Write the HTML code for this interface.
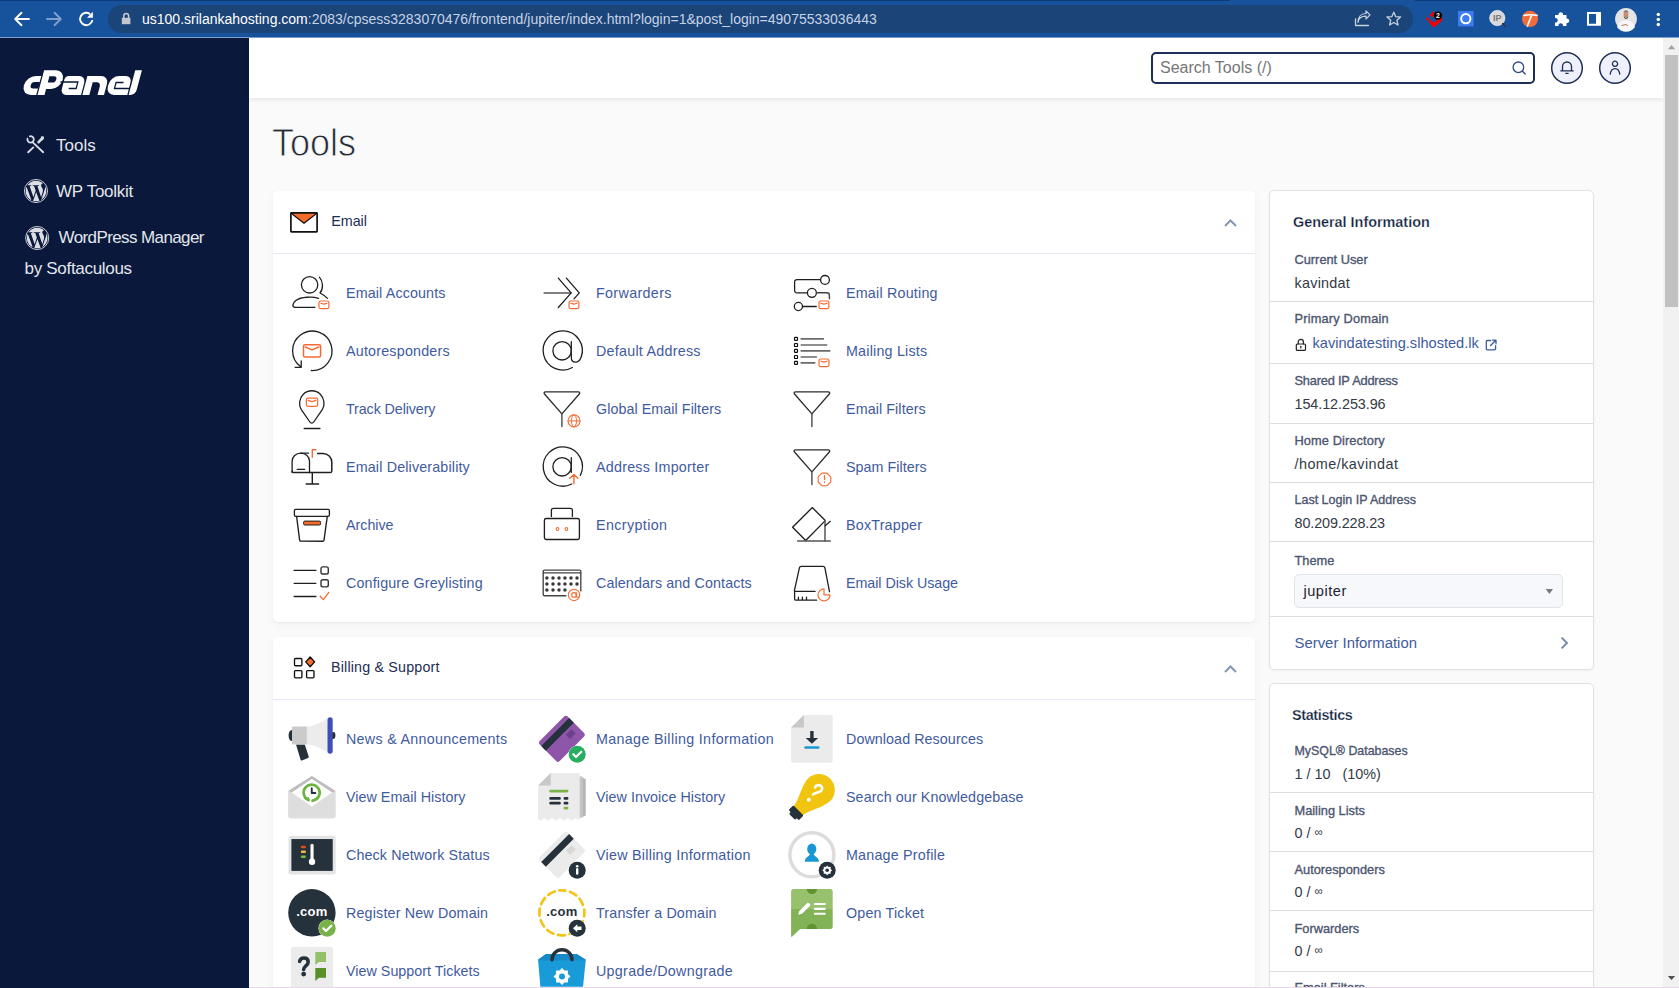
<!DOCTYPE html>
<html><head><meta charset="utf-8"><title>cPanel - Tools</title>
<style>
html,body{margin:0;padding:0;width:1679px;height:988px;overflow:hidden;background:#fafafa}
.t{position:absolute;white-space:nowrap;font-family:"Liberation Sans", sans-serif;line-height:normal}
svg{overflow:visible}
</style></head><body>
<div style="position:absolute;left:0px;top:0px;width:1679px;height:38px;background:#17529d"></div>
<div style="position:absolute;left:0px;top:0px;width:1230px;height:1px;background:#0f3a78"></div>
<div style="position:absolute;left:1415px;top:0px;width:264px;height:1px;background:#0f3a78"></div>
<div style="position:absolute;left:0px;top:37px;width:1679px;height:1px;background:#7fa2d4"></div>
<div style="position:absolute;left:108px;top:5px;width:1305px;height:28px;background:#1b4478;border-radius:14px"></div>
<svg style="position:absolute;left:0px;top:0px" width="40" height="38" viewBox="0 0 40 38"><path d="M29,19 H15.5 M21.5,12.8 L15.2,19 L21.5,25.2" fill="none" stroke="#ffffff" stroke-width="1.9" stroke-linecap="round" stroke-linejoin="round" stroke-linecap="butt"/></svg>
<svg style="position:absolute;left:0px;top:0px" width="70" height="38" viewBox="0 0 70 38"><path d="M47,19 H60.5 M54.5,12.8 L60.8,19 L54.5,25.2" fill="none" stroke="#7f9fcf" stroke-width="1.9" stroke-linecap="round" stroke-linejoin="round" stroke-linecap="butt"/></svg>
<svg style="position:absolute;left:0px;top:0px" width="100" height="38" viewBox="0 0 100 38"><path d="M92.3,20.6 A6.2,6.2 0 1 1 89.6,13.7" fill="none" stroke="#ffffff" stroke-width="1.9" stroke-linecap="round" stroke-linejoin="round" stroke-linecap="butt"/><path d="M87,17.75 L92.9,17.75 L92.9,11.8 Z" fill="#ffffff" /></svg>
<svg style="position:absolute;left:0px;top:0px" width="140" height="38" viewBox="0 0 140 38"><path d="M123.8,18 V15.8 A2.4,2.4 0 0 1 128.6,15.8 V18" fill="none" stroke="#c3c8d0" stroke-width="1.5" stroke-linecap="round" stroke-linejoin="round" /><path d="M121.8,17.8 H130.4 V24.2 H121.8 Z" fill="#c3c8d0" rx="1"/></svg>
<svg style="position:absolute;left:0px;top:0px" width="1400" height="38" viewBox="0 0 1400 38"><path d="M1355.5,19 V25.5 H1368.5" fill="none" stroke="#c8d0dc" stroke-width="1.3" stroke-linecap="round" stroke-linejoin="round" stroke-linecap="butt"/><path d="M1358,22.5 C1358.5,17.5 1362,16.2 1366,16.2 V19 L1370,14.8 L1366,10.8 V13.5 C1361,13.5 1358,17 1358,22.5 Z" fill="none" stroke="#c8d0dc" stroke-width="1.2" stroke-linecap="round" stroke-linejoin="round" /></svg>
<svg style="position:absolute;left:0px;top:0px" width="1420" height="38" viewBox="0 0 1420 38"><path d="M1393.8,12.2 L1395.7,16.6 L1400.6,17 L1396.9,20.3 L1398,25 L1393.8,22.5 L1389.6,25 L1390.7,20.3 L1387,17 L1391.9,16.6 Z" fill="none" stroke="#c8d0dc" stroke-width="1.3" stroke-linecap="round" stroke-linejoin="round" /></svg>
<svg style="position:absolute;left:0px;top:0px" width="1450" height="38" viewBox="0 0 1450 38"><path d="M1429.2,15.5 L1434.2,11 L1435.5,18 Z" fill="#f00000" /><circle cx="1427.6" cy="18.9" r="1.7" fill="#f00000"/><path d="M1430.6,22 L1434,25.2 L1440.6,19.3" fill="none" stroke="#f00000" stroke-width="3.6" stroke-linecap="round" stroke-linejoin="round" stroke-linecap="butt"/><circle cx="1437.9" cy="15.6" r="4.2" fill="#000"/><text x="1437.9" y="18" font-size="6.8" font-weight="700" fill="#fff" text-anchor="middle" font-family="Liberation Sans">2</text></svg>
<svg style="position:absolute;left:0px;top:0px" width="1480" height="38" viewBox="0 0 1480 38"><rect x="1458" y="11" width="15.6" height="15.4" fill="#3b7cf0"/><circle cx="1465.8" cy="18.7" r="4.6" fill="none" stroke="#fff" stroke-width="2"/></svg>
<svg style="position:absolute;left:0px;top:0px" width="1510" height="38" viewBox="0 0 1510 38"><circle cx="1497.3" cy="18" r="7.6" fill="#d9d9d9" stroke="#f0f0f0" stroke-width="0.8"/><text x="1497.2" y="21.3" font-size="9" font-weight="700" fill="#7a7a7a" text-anchor="middle" font-family="Liberation Sans">IP</text><path d="M1502.5,23.5 L1505.3,26.3" fill="none" stroke="#333" stroke-width="1.3" stroke-linecap="round" stroke-linejoin="round" /></svg>
<svg style="position:absolute;left:0px;top:0px" width="1540" height="38" viewBox="0 0 1540 38"><circle cx="1530" cy="18.9" r="8.1" fill="#f26b3a"/><path d="M1524,15.4 C1528,14.6 1533,14.6 1537,15.4 M1531.6,15.2 L1527.4,26" fill="none" stroke="#fff" stroke-width="1.7" stroke-linecap="round" stroke-linejoin="round" /></svg>
<svg style="position:absolute;left:0px;top:0px" width="1570" height="38" viewBox="0 0 1570 38"><path d="M1555,15 H1558.5 A2.3,2.3 0 1 1 1563,15 H1566.5 V18.5 A2.3,2.3 0 1 1 1566.5,23 V26 H1563 A2.3,2.3 0 1 0 1558.5,26 H1555 V22.5 A2.3,2.3 0 1 0 1555,18 Z" fill="#fff" /></svg>
<svg style="position:absolute;left:0px;top:0px" width="1610" height="38" viewBox="0 0 1610 38"><path d="M1587,12 H1601 V25.7 H1587 Z M1589,14 V23.8 H1596 V14 Z" fill="#fff" fill-rule="evenodd"/></svg>
<svg style="position:absolute;left:0px;top:0px" width="1640" height="38" viewBox="0 0 1640 38"><circle cx="1626" cy="19" r="10.9" fill="#e4e4e4"/><path d="M1617,27 C1619,21.5 1622,20.5 1626,20.5 C1630,20.5 1633,21.5 1635,27 A10.9,10.9 0 0 1 1617,27 Z" fill="#f7f7fa"/><ellipse cx="1626" cy="14.5" rx="2.4" ry="3.2" fill="#c29070"/><path d="M1623.2,13 C1623.2,9.5 1628.8,9.5 1628.8,13 L1628.3,11.8 C1627,11 1625,11 1623.7,11.8 Z" fill="#222"/><path d="M1623.8,16 C1624.5,18.5 1627.5,18.5 1628.2,16 L1628,17.5 C1627,19.2 1625,19.2 1624,17.5 Z" fill="#222"/><path d="M1621.5,25.5 L1626,24.5 L1628,26" stroke="#b07850" stroke-width="1" fill="none"/></svg>
<svg style="position:absolute;left:0px;top:0px" width="1670" height="38" viewBox="0 0 1670 38"><circle cx="1658.3" cy="14.4" r="1.7" fill="#fff"/><circle cx="1658.3" cy="19.4" r="1.7" fill="#fff"/><circle cx="1658.3" cy="24.5" r="1.7" fill="#fff"/></svg>
<div class="t" style="left:142px;top:11.33px;font-size:14px;color:#c6d3e6;font-weight:400;letter-spacing:0px"><span style="color:#fff">us100.srilankahosting.com</span>:2083/cpsess3283070476/frontend/jupiter/index.html?login=1&amp;post_login=49075533036443</div>
<div style="position:absolute;left:0px;top:38px;width:249px;height:950px;background:#09183b"></div>
<svg style="position:absolute;left:0px;top:0px" width="160" height="110" viewBox="0 0 160 110"><g transform="translate(0,95) skewX(-15)" fill="#fff"><path d="M36.2,-19 H30.8 A9.5,9.5 0 0 0 21.3,-9.5 A9.5,9.5 0 0 0 30.8,0 H36.2 Z"/><path d="M36.6,-12.9 H31.4 A3.25,3.25 0 0 0 28.15,-9.65 A3.25,3.25 0 0 0 31.4,-6.4 H36.6 Z" fill="#09183b"/><path d="M37.5,0 V-24.75 H49.5 A9.1,9.4 0 0 1 58.6,-15.35 A9.1,9.4 0 0 1 49.5,-6 H44.5 V0 Z"/><path d="M44.4,-18.7 H49 A3.1,3.1 0 0 1 52.1,-15.6 A3.1,3.1 0 0 1 49,-12.5 H44.4 Z" fill="#09183b"/><path d="M63,-19 H74 A7,7 0 0 1 81,-12 V0 H66.2 A6,6 0 0 1 60.2,-6 V-15.8 A3.2,3.2 0 0 1 63,-19 Z"/><path d="M57,-13 H74.4 V-6.5 H67" fill="none" stroke="#09183b" stroke-width="1.3"/><path d="M82.3,0 V-19 H96 A8,8 0 0 1 104,-11 V0 H97.5 V-8.7 A4,4 0 0 0 93.5,-12.7 H89.3 V0 Z"/><path d="M127.3,0 H114 A8.4,8.4 0 0 1 105.6,-8.4 V-10.6 A8.4,8.4 0 0 1 114,-19 H120.8 A6.3,6.3 0 0 1 127.1,-12.7 Z"/><path d="M120.2,-12.5 H112.75 V-6.5 H131" fill="none" stroke="#09183b" stroke-width="1.3"/><path d="M128.6,0 V-24.75 H135.3 V-5 A5,5 0 0 1 130.3,0 Z"/></g></svg>
<svg style="position:absolute;left:0px;top:0px" width="60" height="160" viewBox="0 0 60 160"><path d="M32.8,142.4 L43.2,152.2" fill="none" stroke="#dcdee4" stroke-width="1.9" stroke-linecap="round" stroke-linejoin="round" /><path d="M28.2,152.3 L33.3,147.4" fill="none" stroke="#dcdee4" stroke-width="1.9" stroke-linecap="round" stroke-linejoin="round" /><path d="M38.6,142.2 L42.6,137.8" fill="none" stroke="#dcdee4" stroke-width="2.6" stroke-linecap="round" stroke-linejoin="round" /><path d="M40.8,136.6 L43.8,136.4 L43.6,139.2 L41.5,141 Z" fill="#dcdee4" /><path d="M29.8,136.3 A3.2,3.2 0 1 1 27.5,138.6" fill="none" stroke="#dcdee4" stroke-width="1.8" stroke-linecap="round" stroke-linejoin="round" /></svg>
<svg style="position:absolute;left:0px;top:0px" width="60" height="260" viewBox="0 0 60 260"><circle cx="36" cy="191" r="11.55" fill="none" stroke="#dcdee3" stroke-width="0.9"/><g transform="translate(36,191) scale(0.9550) translate(-12,-12)"><path d="M21.469 6.825c.84 1.537 1.318 3.3 1.318 5.175 0 3.979-2.156 7.456-5.363 9.325l3.295-9.527c.615-1.54.82-2.771.82-3.864 0-.405-.026-.78-.07-1.11m-7.981.105c.647-.03 1.232-.105 1.232-.105.582-.075.514-.93-.067-.899 0 0-1.755.135-2.88.135-1.064 0-2.85-.15-2.85-.15-.585-.03-.661.855-.075.885 0 0 .54.061 1.125.09l1.68 4.605-2.37 7.08L5.354 6.9c.649-.03 1.234-.1 1.234-.1.585-.075.516-.93-.065-.896 0 0-1.746.138-2.874.138-.2 0-.438-.008-.69-.015C4.911 3.15 8.235 1.215 12 1.215c2.809 0 5.365 1.072 7.286 2.833-.046-.003-.091-.009-.141-.009-1.06 0-1.812.923-1.812 1.914 0 .89.513 1.643 1.06 2.531.411.72.89 1.643.89 2.977 0 .915-.354 1.994-.821 3.479l-1.075 3.585-3.9-11.61.001.014zM12 22.784c-1.059 0-2.081-.153-3.048-.437l3.237-9.406 3.315 9.087c.024.053.05.101.078.149-1.12.393-2.325.609-3.582.609M1.211 12c0-1.564.336-3.05.935-4.39L7.29 21.709C3.694 19.96 1.212 16.271 1.211 12" fill="#dcdee3"/></g></svg>
<svg style="position:absolute;left:0px;top:0px" width="60" height="260" viewBox="0 0 60 260"><circle cx="37.2" cy="238" r="11.55" fill="none" stroke="#dcdee3" stroke-width="0.9"/><g transform="translate(37.2,238) scale(0.9550) translate(-12,-12)"><path d="M21.469 6.825c.84 1.537 1.318 3.3 1.318 5.175 0 3.979-2.156 7.456-5.363 9.325l3.295-9.527c.615-1.54.82-2.771.82-3.864 0-.405-.026-.78-.07-1.11m-7.981.105c.647-.03 1.232-.105 1.232-.105.582-.075.514-.93-.067-.899 0 0-1.755.135-2.88.135-1.064 0-2.85-.15-2.85-.15-.585-.03-.661.855-.075.885 0 0 .54.061 1.125.09l1.68 4.605-2.37 7.08L5.354 6.9c.649-.03 1.234-.1 1.234-.1.585-.075.516-.93-.065-.896 0 0-1.746.138-2.874.138-.2 0-.438-.008-.69-.015C4.911 3.15 8.235 1.215 12 1.215c2.809 0 5.365 1.072 7.286 2.833-.046-.003-.091-.009-.141-.009-1.06 0-1.812.923-1.812 1.914 0 .89.513 1.643 1.06 2.531.411.72.89 1.643.89 2.977 0 .915-.354 1.994-.821 3.479l-1.075 3.585-3.9-11.61.001.014zM12 22.784c-1.059 0-2.081-.153-3.048-.437l3.237-9.406 3.315 9.087c.024.053.05.101.078.149-1.12.393-2.325.609-3.582.609M1.211 12c0-1.564.336-3.05.935-4.39L7.29 21.709C3.694 19.96 1.212 16.271 1.211 12" fill="#dcdee3"/></g></svg>
<div class="t" style="left:56px;top:135.62px;font-size:17px;color:#e3e6ec;font-weight:400;">Tools</div>
<div class="t" style="left:56px;top:181.62px;font-size:17px;color:#e3e6ec;font-weight:400;letter-spacing:-0.27px">WP Toolkit</div>
<div class="t" style="left:58.5px;top:227.62px;font-size:17px;color:#e3e6ec;font-weight:400;letter-spacing:-0.6px">WordPress Manager</div>
<div class="t" style="left:24.5px;top:259.12px;font-size:17px;color:#e3e6ec;font-weight:400;letter-spacing:-0.3px">by Softaculous</div>
<div style="position:absolute;left:249px;top:38px;width:1414px;height:950px;background:#fafafa"></div>
<div style="position:absolute;left:249px;top:38px;width:1414px;height:60px;background:#fff;box-shadow:0 1px 5px rgba(0,0,0,0.1)"></div>
<div style="position:absolute;left:1151px;top:52px;width:384px;height:32px;box-sizing:border-box;border:2px solid #1d2d55;border-radius:5px;background:#fff"></div>
<div class="t" style="left:1160px;top:58.52px;font-size:16px;color:#767676;font-weight:400;">Search Tools (/)</div>
<svg style="position:absolute;left:1500px;top:40px" width="140" height="60" viewBox="0 0 140 60"><circle cx="18.4" cy="27.3" r="5.3" fill="none" stroke="#2f4a80" stroke-width="1.3"/><path d="M22.4,31.3 L25.3,33.9" fill="none" stroke="#2f4a80" stroke-width="1.4" stroke-linecap="round" stroke-linejoin="round" /></svg>
<svg style="position:absolute;left:1540px;top:40px" width="100" height="60" viewBox="0 0 100 60"><circle cx="27" cy="28" r="15.3" fill="#eef0fb" stroke="#1d2d55" stroke-width="1.5"/><circle cx="75" cy="28" r="15.3" fill="#eef0fb" stroke="#1d2d55" stroke-width="1.5"/><path d="M22.5,30.5 V26.5 A4.5,4.5 0 0 1 31.5,26.5 V30.5 M20.8,30.8 H33.2 M25.8,33.3 H28.2" fill="none" stroke="#1d2d55" stroke-width="1.3" stroke-linecap="round" stroke-linejoin="round" /><path d="M75,21.2 A2.6,2.6 0 1 1 74.99,21.2 M70.2,34.2 C70.8,30.2 72.6,28.7 75,28.7 C77.4,28.7 79.2,30.2 79.8,34.2" fill="none" stroke="#1d2d55" stroke-width="1.3" stroke-linecap="round" stroke-linejoin="round" /></svg>
<div style="position:absolute;left:1663px;top:38px;width:16px;height:950px;background:#f1f1f1"></div>
<div style="position:absolute;left:1665px;top:55px;width:13px;height:252px;background:#c1c1c1"></div>
<svg style="position:absolute;left:1663px;top:38px" width="16" height="16" viewBox="0 0 16 16"><path d="M4.9,11.2 L12.2,11.2 L8.55,7 Z" fill="#a3a3a3" /></svg>
<svg style="position:absolute;left:1663px;top:970px" width="16" height="18" viewBox="0 0 16 18"><path d="M4.8,5.9 L12.2,5.9 L8.5,10.1 Z" fill="#505050" /></svg>
<div class="t" style="left:272px;top:120.76px;font-size:38.5px;color:#242a36;font-weight:400;-webkit-text-stroke:0.85px #fafafa;transform:scaleX(0.935);transform-origin:0 0">Tools</div>
<div style="position:absolute;left:273px;top:191px;width:982px;height:431px;background:#fff;border-radius:5px;box-shadow:0 1px 2px rgba(0,0,0,0.05),0 3px 10px rgba(0,0,0,0.035)"></div>
<div style="position:absolute;left:273px;top:253px;width:982px;height:1px;background:#e4e9f2"></div>
<svg style="position:absolute;left:285px;top:205px" width="40" height="35" viewBox="0 0 40 35"><path d="M6,8 H32 L19,18.5 Z" fill="#f36c2b" /><rect x="5.9" y="7.9" width="26.2" height="19" rx="0.6" fill="none" stroke="#111" stroke-width="1.7"/><path d="M6.5,8.5 L19,18.3 L31.5,8.5" fill="none" stroke="#111" stroke-width="1.2" stroke-linecap="round" stroke-linejoin="round" /></svg>
<div class="t" style="left:331.2px;top:213.06px;font-size:14.3px;color:#1d2e52;font-weight:400;">Email</div>
<svg style="position:absolute;left:1224px;top:219px" width="13" height="8" viewBox="0 0 13 8"><path d="M1 7 L6.5 1.5 L12 7" stroke="#8596b5" stroke-width="2" fill="none"/></svg>
<div class="t" style="left:346px;top:285.06px;font-size:14.3px;color:#3f5b9e;font-weight:400;letter-spacing:0.131px">Email Accounts</div>
<div class="t" style="left:346px;top:343.06px;font-size:14.3px;color:#3f5b9e;font-weight:400;letter-spacing:0.208px">Autoresponders</div>
<div class="t" style="left:346px;top:401.06px;font-size:14.3px;color:#3f5b9e;font-weight:400;letter-spacing:-0.100px">Track Delivery</div>
<div class="t" style="left:346px;top:459.06px;font-size:14.3px;color:#3f5b9e;font-weight:400;letter-spacing:0.158px">Email Deliverability</div>
<div class="t" style="left:346px;top:517.06px;font-size:14.3px;color:#3f5b9e;font-weight:400;letter-spacing:-0.017px">Archive</div>
<div class="t" style="left:346px;top:575.06px;font-size:14.3px;color:#3f5b9e;font-weight:400;letter-spacing:0.155px">Configure Greylisting</div>
<div class="t" style="left:596px;top:285.06px;font-size:14.3px;color:#3f5b9e;font-weight:400;letter-spacing:0.344px">Forwarders</div>
<div class="t" style="left:596px;top:343.06px;font-size:14.3px;color:#3f5b9e;font-weight:400;letter-spacing:0.250px">Default Address</div>
<div class="t" style="left:596px;top:401.06px;font-size:14.3px;color:#3f5b9e;font-weight:400;letter-spacing:0.063px">Global Email Filters</div>
<div class="t" style="left:596px;top:459.06px;font-size:14.3px;color:#3f5b9e;font-weight:400;letter-spacing:0.233px">Address Importer</div>
<div class="t" style="left:596px;top:517.06px;font-size:14.3px;color:#3f5b9e;font-weight:400;letter-spacing:0.389px">Encryption</div>
<div class="t" style="left:596px;top:575.06px;font-size:14.3px;color:#3f5b9e;font-weight:400;letter-spacing:0.110px">Calendars and Contacts</div>
<div class="t" style="left:846px;top:285.06px;font-size:14.3px;color:#3f5b9e;font-weight:400;letter-spacing:0.208px">Email Routing</div>
<div class="t" style="left:846px;top:343.06px;font-size:14.3px;color:#3f5b9e;font-weight:400;letter-spacing:0.208px">Mailing Lists</div>
<div class="t" style="left:846px;top:401.06px;font-size:14.3px;color:#3f5b9e;font-weight:400;letter-spacing:0.092px">Email Filters</div>
<div class="t" style="left:846px;top:459.06px;font-size:14.3px;color:#3f5b9e;font-weight:400;letter-spacing:0.045px">Spam Filters</div>
<div class="t" style="left:846px;top:517.06px;font-size:14.3px;color:#3f5b9e;font-weight:400;letter-spacing:0.200px">BoxTrapper</div>
<div class="t" style="left:846px;top:575.06px;font-size:14.3px;color:#3f5b9e;font-weight:400;letter-spacing:-0.053px">Email Disk Usage</div>
<svg style="position:absolute;left:286px;top:268px" width="50" height="50" viewBox="0 0 50 50"><circle cx="23.6" cy="16.8" r="8.2" fill="none" stroke="#1f1f1f" stroke-width="1.3"/><path d="M32.6,30.3 C27,28.6 15,28.4 9.8,32.6 C6.8,35 5.8,38.6 8.6,39.3 H28.9" fill="none" stroke="#1f1f1f" stroke-width="1.3" stroke-linecap="round" stroke-linejoin="round" /><path d="M33.4,9.1 C37.2,13.3 37.6,20.5 34,25 C37,26.5 39.5,28.4 41.5,30.4" fill="none" stroke="#1f1f1f" stroke-width="1.3" stroke-linecap="round" stroke-linejoin="round" /><rect x="33" y="33" width="9.899999999999999" height="7.600000000000001" rx="1.5" fill="#fff" stroke="#f36c35" stroke-width="1.2"/><path d="M34.8,35.2 L37.95,36.192 L41.1,35.2" fill="none" stroke="#f36c35" stroke-width="1.2" stroke-linecap="round" stroke-linejoin="round" /></svg>
<svg style="position:absolute;left:286px;top:326px" width="50" height="50" viewBox="0 0 50 50"><path d="M25.3,44.5 A19.7,19.7 0 1 0 14.9,40.9" fill="none" stroke="#1f1f1f" stroke-width="1.3" stroke-linecap="round" stroke-linejoin="round" /><path d="M15.2,34.9 V41.3 H9.1" fill="none" stroke="#1f1f1f" stroke-width="1.3" stroke-linecap="round" stroke-linejoin="round" stroke-linecap="butt"/><rect x="17.5" y="18.8" width="17.1" height="12.099999999999998" rx="1.5" fill="#fff" stroke="#f36c35" stroke-width="1.5"/><path d="M19.3,21.0 L26.05,23.881999999999998 L32.800000000000004,21.0" fill="none" stroke="#f36c35" stroke-width="1.5" stroke-linecap="round" stroke-linejoin="round" /></svg>
<svg style="position:absolute;left:286px;top:384px" width="50" height="50" viewBox="0 0 50 50"><path d="M23.9,38 L15.3,25.6 C12.4,21.2 13.2,14.2 17.3,10.2 C22,5.6 29.6,5.6 34.3,10.2 C38.4,14.2 39.2,21.2 36.3,25.6 L27.7,38 C26.8,39.4 24.8,39.4 23.9,38 Z" fill="none" stroke="#1f1f1f" stroke-width="1.3" stroke-linecap="round" stroke-linejoin="round" /><path d="M18.2,44.5 H33.9" fill="none" stroke="#1f1f1f" stroke-width="1.4" stroke-linecap="round" stroke-linejoin="round" stroke-linecap="butt"/><rect x="20.4" y="14.2" width="11.3" height="8.100000000000001" rx="1.5" fill="#fff" stroke="#f36c35" stroke-width="1.2"/><path d="M22.2,16.4 L26.049999999999997,17.602 L29.9,16.4" fill="none" stroke="#f36c35" stroke-width="1.2" stroke-linecap="round" stroke-linejoin="round" /></svg>
<svg style="position:absolute;left:286px;top:442px" width="50" height="50" viewBox="0 0 50 50"><path d="M6.1,30.5 V19.2 A8.7,8 0 0 1 14.8,11.2 H22.5 M6.1,19.2" fill="none" stroke="#1f1f1f" stroke-width="1.3" stroke-linecap="round" stroke-linejoin="round" /><path d="M14.8,11.2 A8.7,8 0 0 1 23.5,19.2 V30.5" fill="none" stroke="#1f1f1f" stroke-width="1.3" stroke-linecap="round" stroke-linejoin="round" /><path d="M31.6,11.4 H37 A8.8,8.8 0 0 1 45.8,20.2 V29 A1.6,1.6 0 0 1 44.2,30.6 H7.7 A1.6,1.6 0 0 1 6.1,29" fill="none" stroke="#1f1f1f" stroke-width="1.5" stroke-linecap="round" stroke-linejoin="round" /><path d="M11.1,27.3 H18.7" fill="none" stroke="#1f1f1f" stroke-width="1.2" stroke-linecap="round" stroke-linejoin="round" stroke-linecap="butt"/><path d="M26.3,31 V42 M20.2,42 H32.6" fill="none" stroke="#1f1f1f" stroke-width="1.4" stroke-linecap="round" stroke-linejoin="round" stroke-linecap="butt"/><path d="M26.3,15.2 V7.7 H29.9" fill="none" stroke="#f36c35" stroke-width="1.4" stroke-linecap="round" stroke-linejoin="round" stroke-linecap="butt"/></svg>
<svg style="position:absolute;left:286px;top:500px" width="50" height="50" viewBox="0 0 50 50"><rect x="8.4" y="9.4" width="35" height="7" rx="1.3" fill="none" stroke="#1f1f1f" stroke-width="1.35"/><path d="M10.6,16.4 L13.6,40.2 A1.2,1.2 0 0 0 14.8,41.2 H36.8 A1.2,1.2 0 0 0 38,40.2 L41.3,16.4" fill="none" stroke="#1f1f1f" stroke-width="1.35" stroke-linecap="round" stroke-linejoin="round" /><rect x="17.6" y="21.1" width="17" height="3.9" rx="1.2" fill="#f36c2b" stroke="#1f1f1f" stroke-width="1"/></svg>
<svg style="position:absolute;left:286px;top:558px" width="50" height="50" viewBox="0 0 50 50"><path d="M8.1,12.4 H29.9 M8.1,25.3 H29.9 M8.1,38.5 H29.9" fill="none" stroke="#1f1f1f" stroke-width="1.3" stroke-linecap="round" stroke-linejoin="round" stroke-linecap="butt"/><rect x="35" y="8.9" width="7.3" height="7.1" rx="1.8" fill="none" stroke="#333" stroke-width="1.4"/><rect x="35" y="21.8" width="7.3" height="7.1" rx="1.8" fill="none" stroke="#333" stroke-width="1.4"/><path d="M34.2,38.2 L37.4,41.6 L42.8,34.4" fill="none" stroke="#f36c35" stroke-width="1.3" stroke-linecap="round" stroke-linejoin="round" /></svg>
<svg style="position:absolute;left:536px;top:268px" width="50" height="50" viewBox="0 0 50 50"><path d="M8.1,24.9 H34.9" fill="none" stroke="#555" stroke-width="1.5" stroke-linecap="round" stroke-linejoin="round" stroke-linecap="butt"/><path d="M22.3,10.1 L35.2,24.9 L22.3,39.5" fill="none" stroke="#1f1f1f" stroke-width="1.3" stroke-linecap="round" stroke-linejoin="round" /><path d="M30.4,10.1 L43.3,24.9 L38,30.9" fill="none" stroke="#1f1f1f" stroke-width="1.3" stroke-linecap="round" stroke-linejoin="round" /><rect x="33" y="33" width="9.899999999999999" height="7.600000000000001" rx="1.5" fill="#fff" stroke="#f36c35" stroke-width="1.2"/><path d="M34.8,35.2 L37.95,36.192 L41.1,35.2" fill="none" stroke="#f36c35" stroke-width="1.2" stroke-linecap="round" stroke-linejoin="round" /></svg>
<svg style="position:absolute;left:536px;top:326px" width="50" height="50" viewBox="0 0 50 50"><path d="M36.4,41.5 A19.6,19.6 0 1 1 45.2,31 C43.9,34.6 41.8,36.2 39.5,36.2 C37,36.2 35.3,34.6 35.3,31.5 V15.7" fill="none" stroke="#1f1f1f" stroke-width="1.3" stroke-linecap="round" stroke-linejoin="round" /><circle cx="26.1" cy="24.8" r="9.2" fill="none" stroke="#1f1f1f" stroke-width="1.3"/></svg>
<svg style="position:absolute;left:536px;top:384px" width="50" height="50" viewBox="0 0 50 50"><path d="M9.6,7.8 H42.2 C43.6,7.8 44.2,9 43.3,10 L25.9,29.9 L8.5,10 C7.6,9 8.2,7.8 9.6,7.8 Z" fill="none" stroke="#2a2a2a" stroke-width="1.3" stroke-linecap="round" stroke-linejoin="round" /><path d="M25.9,29.9 V42.5" fill="none" stroke="#555" stroke-width="1.5" stroke-linecap="round" stroke-linejoin="round" stroke-linecap="butt"/><circle cx="38" cy="36.9" r="6" fill="#fff" stroke="#f36c35" stroke-width="1.1"/><ellipse cx="38" cy="36.9" rx="2.5" ry="6" fill="none" stroke="#f36c35" stroke-width="1"/><path d="M32,36.9 H44" fill="none" stroke="#f36c35" stroke-width="1" stroke-linecap="round" stroke-linejoin="round" /></svg>
<svg style="position:absolute;left:536px;top:442px" width="50" height="50" viewBox="0 0 50 50"><path d="M35.7,42 A19.6,19.6 0 1 1 44.3,33.4" fill="none" stroke="#1f1f1f" stroke-width="1.3" stroke-linecap="round" stroke-linejoin="round" /><circle cx="26.1" cy="24.8" r="9.2" fill="none" stroke="#1f1f1f" stroke-width="1.3"/><path d="M35.3,15.7 V30.4" fill="none" stroke="#1f1f1f" stroke-width="1.3" stroke-linecap="round" stroke-linejoin="round" stroke-linecap="butt"/><path d="M37.9,41.7 V32.8 M33.8,36.3 L37.9,32.4 L42,36.3" fill="none" stroke="#f36c35" stroke-width="1.4" stroke-linecap="round" stroke-linejoin="round" /></svg>
<svg style="position:absolute;left:536px;top:500px" width="50" height="50" viewBox="0 0 50 50"><path d="M15.4,16.4 V10.3 A2,2 0 0 1 17.4,8.3 H34.4 A2,2 0 0 1 36.4,10.3 V16.4" fill="none" stroke="#1f1f1f" stroke-width="1.3" stroke-linecap="round" stroke-linejoin="round" /><rect x="8.4" y="18.5" width="35" height="21" rx="1.8" fill="none" stroke="#1f1f1f" stroke-width="1.35"/><ellipse cx="21.5" cy="28.95" rx="1.3" ry="1.5" fill="none" stroke="#f36c35" stroke-width="1.1"/><ellipse cx="30.4" cy="28.95" rx="1.3" ry="1.5" fill="none" stroke="#f36c35" stroke-width="1.1"/></svg>
<svg style="position:absolute;left:536px;top:558px" width="50" height="50" viewBox="0 0 50 50"><path d="M29.9,37.7 H8.5 A1.3,1.3 0 0 1 7.2,36.4 V13.4 A1.3,1.3 0 0 1 8.5,12.1 H43.5 A1.3,1.3 0 0 1 44.8,13.4 V32.9" fill="none" stroke="#444" stroke-width="1.35" stroke-linecap="round" stroke-linejoin="round" /><path d="M7.3,14.9 H44.7" fill="none" stroke="#444" stroke-width="1.35" stroke-linecap="round" stroke-linejoin="round" stroke-linecap="butt"/><circle cx="10.9" cy="20" r="1.75" fill="#383838"/><circle cx="17" cy="20" r="1.75" fill="#383838"/><circle cx="23" cy="20" r="1.75" fill="#383838"/><circle cx="28.95" cy="20" r="1.75" fill="#383838"/><circle cx="35" cy="20" r="1.75" fill="#383838"/><circle cx="41" cy="20" r="1.75" fill="#383838"/><circle cx="10.9" cy="25.9" r="1.75" fill="#383838"/><circle cx="17" cy="25.9" r="1.75" fill="#383838"/><circle cx="23" cy="25.9" r="1.75" fill="#383838"/><circle cx="28.95" cy="25.9" r="1.75" fill="#383838"/><circle cx="35" cy="25.9" r="1.75" fill="#383838"/><circle cx="41" cy="25.9" r="1.75" fill="#383838"/><circle cx="10.9" cy="31.9" r="1.75" fill="#383838"/><circle cx="17" cy="31.9" r="1.75" fill="#383838"/><circle cx="23" cy="31.9" r="1.75" fill="#383838"/><circle cx="28.95" cy="31.9" r="1.75" fill="#383838"/><circle cx="38" cy="36.9" r="5.7" fill="none" stroke="#f36c35" stroke-width="1.1"/><circle cx="38" cy="36.9" r="2.3" fill="none" stroke="#f36c35" stroke-width="1.1"/><path d="M40.3,34.5 V38.2 C40.3,39.5 41.6,39.7 42.3,38.8" fill="none" stroke="#f36c35" stroke-width="1.1" stroke-linecap="round" stroke-linejoin="round" /></svg>
<svg style="position:absolute;left:786px;top:268px" width="50" height="50" viewBox="0 0 50 50"><path d="M34.4,11.55 H11 A2.4,2.4 0 0 0 8.6,14 V22.4 A2.4,2.4 0 0 0 11,24.8 H21.2" fill="none" stroke="#1f1f1f" stroke-width="1.3" stroke-linecap="round" stroke-linejoin="round" /><circle cx="39" cy="11.9" r="4.4" fill="#fff" stroke="#1f1f1f" stroke-width="1.3"/><circle cx="25.9" cy="24.8" r="4.5" fill="#fff" stroke="#1f1f1f" stroke-width="1.3"/><path d="M30.6,24.8 H40.9 A2.5,2.5 0 0 1 43.4,27.3 V30.8" fill="none" stroke="#444" stroke-width="1.4" stroke-linecap="round" stroke-linejoin="round" /><circle cx="12.4" cy="38.5" r="4.1" fill="#fff" stroke="#1f1f1f" stroke-width="1.3"/><path d="M16.7,38.5 H30.3" fill="none" stroke="#1f1f1f" stroke-width="1.3" stroke-linecap="round" stroke-linejoin="round" stroke-linecap="butt"/><rect x="33" y="33" width="9.899999999999999" height="7.600000000000001" rx="1.5" fill="#fff" stroke="#f36c35" stroke-width="1.2"/><path d="M34.8,35.2 L37.95,36.192 L41.1,35.2" fill="none" stroke="#f36c35" stroke-width="1.2" stroke-linecap="round" stroke-linejoin="round" /></svg>
<svg style="position:absolute;left:786px;top:326px" width="50" height="50" viewBox="0 0 50 50"><rect x="8.5" y="11.4" width="3" height="3" rx="0.6" fill="none" stroke="#111" stroke-width="1.2"/><path d="M15.2,12.9 H37.4" fill="none" stroke="#6a6a6a" stroke-width="1.6" stroke-linecap="round" stroke-linejoin="round" stroke-linecap="butt"/><rect x="8.5" y="17.5" width="3" height="3" rx="0.6" fill="none" stroke="#111" stroke-width="1.2"/><path d="M15.2,19 H40.7" fill="none" stroke="#6a6a6a" stroke-width="1.6" stroke-linecap="round" stroke-linejoin="round" stroke-linecap="butt"/><rect x="8.5" y="23.4" width="3" height="3" rx="0.6" fill="none" stroke="#111" stroke-width="1.2"/><path d="M15.2,24.9 H43.8" fill="none" stroke="#6a6a6a" stroke-width="1.6" stroke-linecap="round" stroke-linejoin="round" stroke-linecap="butt"/><rect x="8.5" y="29.5" width="3" height="3" rx="0.6" fill="none" stroke="#111" stroke-width="1.2"/><path d="M15.2,31 H30.4" fill="none" stroke="#6a6a6a" stroke-width="1.6" stroke-linecap="round" stroke-linejoin="round" stroke-linecap="butt"/><rect x="8.5" y="35.4" width="3" height="3" rx="0.6" fill="none" stroke="#111" stroke-width="1.2"/><path d="M15.2,36.9 H28.8" fill="none" stroke="#6a6a6a" stroke-width="1.6" stroke-linecap="round" stroke-linejoin="round" stroke-linecap="butt"/><rect x="33" y="33" width="9.899999999999999" height="7.600000000000001" rx="1.5" fill="#fff" stroke="#f36c35" stroke-width="1.2"/><path d="M34.8,35.2 L37.95,36.192 L41.1,35.2" fill="none" stroke="#f36c35" stroke-width="1.2" stroke-linecap="round" stroke-linejoin="round" /></svg>
<svg style="position:absolute;left:786px;top:384px" width="50" height="50" viewBox="0 0 50 50"><path d="M9.6,7.8 H42.2 C43.6,7.8 44.2,9 43.3,10 L25.9,29.9 L8.5,10 C7.6,9 8.2,7.8 9.6,7.8 Z" fill="none" stroke="#2a2a2a" stroke-width="1.3" stroke-linecap="round" stroke-linejoin="round" /><path d="M25.9,29.9 V42.5" fill="none" stroke="#555" stroke-width="1.5" stroke-linecap="round" stroke-linejoin="round" stroke-linecap="butt"/></svg>
<svg style="position:absolute;left:786px;top:442px" width="50" height="50" viewBox="0 0 50 50"><path d="M9.6,7.8 H42.2 C43.6,7.8 44.2,9 43.3,10 L25.9,29.9 L8.5,10 C7.6,9 8.2,7.8 9.6,7.8 Z" fill="none" stroke="#2a2a2a" stroke-width="1.3" stroke-linecap="round" stroke-linejoin="round" /><path d="M25.9,29.9 V42.5" fill="none" stroke="#555" stroke-width="1.5" stroke-linecap="round" stroke-linejoin="round" stroke-linecap="butt"/><path d="M35.9,31.1 H41.1 L44.8,34.8 V40 L41.1,43.7 H35.9 L32.2,40 V34.8 Z" fill="none" stroke="#f36c35" stroke-width="1.1" stroke-linecap="round" stroke-linejoin="round" /><path d="M38.5,33.6 V37.4 M38.5,40 V40.3" fill="none" stroke="#f36c35" stroke-width="1.3" stroke-linecap="round" stroke-linejoin="round" /></svg>
<svg style="position:absolute;left:786px;top:500px" width="50" height="50" viewBox="0 0 50 50"><path d="M26.3,7.6 L39,20.2 M39,20.9 L19.7,40.5 L6.6,27.3 L25.6,8.3" fill="none" stroke="#1f1f1f" stroke-width="1.35" stroke-linecap="round" stroke-linejoin="round" /><path d="M11.6,41 H44.3" fill="none" stroke="#555" stroke-width="1.5" stroke-linecap="round" stroke-linejoin="round" stroke-linecap="butt"/><path d="M39,20.75 V41" fill="none" stroke="#555" stroke-width="1.5" stroke-linecap="round" stroke-linejoin="round" stroke-linecap="butt"/><path d="M39.2,25.8 L44.3,21.3" fill="none" stroke="#1f1f1f" stroke-width="1.2" stroke-linecap="round" stroke-linejoin="round" /></svg>
<svg style="position:absolute;left:786px;top:558px" width="50" height="50" viewBox="0 0 50 50"><path d="M8.35,32.9 L13.4,9.9 A2,2 0 0 1 15.3,8.35 H37 A2,2 0 0 1 38.9,9.9 L43.5,33.6" fill="none" stroke="#1f1f1f" stroke-width="1.3" stroke-linecap="round" stroke-linejoin="round" /><path d="M8.6,32.9 V41 A1.2,1.2 0 0 0 9.8,42.2 H30.6 M8.6,33.4 H29.1 M12.4,39.2 V42 M16.4,39.2 V42 M20.5,39.2 V42" fill="none" stroke="#1f1f1f" stroke-width="1.3" stroke-linecap="round" stroke-linejoin="round" stroke-linecap="butt"/><path d="M38,30.9 A6,6 0 1 0 44,36.9 H38 Z" fill="none" stroke="#f36c35" stroke-width="1.2" stroke-linecap="round" stroke-linejoin="round" /></svg>
<div style="position:absolute;left:273px;top:637px;width:982px;height:400px;background:#fff;border-radius:5px;box-shadow:0 1px 2px rgba(0,0,0,0.05),0 3px 10px rgba(0,0,0,0.035)"></div>
<div style="position:absolute;left:273px;top:699px;width:982px;height:1px;background:#e4e9f2"></div>
<svg style="position:absolute;left:285px;top:650px" width="40" height="35" viewBox="0 0 40 35"><rect x="9.5" y="8.5" width="7.4" height="7.2" rx="1" fill="none" stroke="#111" stroke-width="1.35"/><rect x="9.5" y="20.6" width="7.4" height="7.2" rx="1" fill="none" stroke="#111" stroke-width="1.35"/><rect x="21.6" y="20.6" width="7.4" height="7.2" rx="1" fill="none" stroke="#111" stroke-width="1.35"/><path d="M25.2,7 L29.6,11.9 L25.2,16.8 L20.8,11.9 Z" fill="#f36c2b" stroke="#111" stroke-width="1.4" stroke-linejoin="round"/></svg>
<div class="t" style="left:331px;top:659.06px;font-size:14.3px;color:#1d2e52;font-weight:400;letter-spacing:0.17px">Billing &amp; Support</div>
<svg style="position:absolute;left:1224px;top:665px" width="13" height="8" viewBox="0 0 13 8"><path d="M1 7 L6.5 1.5 L12 7" stroke="#8596b5" stroke-width="2" fill="none"/></svg>
<div class="t" style="left:346px;top:731.06px;font-size:14.3px;color:#3f5b9e;font-weight:400;letter-spacing:0.289px">News &amp; Announcements</div>
<div class="t" style="left:346px;top:789.06px;font-size:14.3px;color:#3f5b9e;font-weight:400;letter-spacing:0.024px">View Email History</div>
<div class="t" style="left:346px;top:847.06px;font-size:14.3px;color:#3f5b9e;font-weight:400;letter-spacing:0.116px">Check Network Status</div>
<div class="t" style="left:346px;top:905.06px;font-size:14.3px;color:#3f5b9e;font-weight:400;letter-spacing:0.167px">Register New Domain</div>
<div class="t" style="left:346px;top:963.06px;font-size:14.3px;color:#3f5b9e;font-weight:400;letter-spacing:0.026px">View Support Tickets</div>
<div class="t" style="left:596px;top:731.06px;font-size:14.3px;color:#3f5b9e;font-weight:400;letter-spacing:0.336px">Manage Billing Information</div>
<div class="t" style="left:596px;top:789.06px;font-size:14.3px;color:#3f5b9e;font-weight:400;letter-spacing:0.037px">View Invoice History</div>
<div class="t" style="left:596px;top:847.06px;font-size:14.3px;color:#3f5b9e;font-weight:400;letter-spacing:0.265px">View Billing Information</div>
<div class="t" style="left:596px;top:905.06px;font-size:14.3px;color:#3f5b9e;font-weight:400;letter-spacing:0.162px">Transfer a Domain</div>
<div class="t" style="left:596px;top:963.06px;font-size:14.3px;color:#3f5b9e;font-weight:400;letter-spacing:0.294px">Upgrade/Downgrade</div>
<div class="t" style="left:846px;top:731.06px;font-size:14.3px;color:#3f5b9e;font-weight:400;letter-spacing:0.071px">Download Resources</div>
<div class="t" style="left:846px;top:789.06px;font-size:14.3px;color:#3f5b9e;font-weight:400;letter-spacing:0.078px">Search our Knowledgebase</div>
<div class="t" style="left:846px;top:847.06px;font-size:14.3px;color:#3f5b9e;font-weight:400;letter-spacing:0.208px">Manage Profile</div>
<div class="t" style="left:846px;top:905.06px;font-size:14.3px;color:#3f5b9e;font-weight:400;letter-spacing:0.180px">Open Ticket</div>
<svg style="position:absolute;left:282px;top:710px" width="60" height="60" viewBox="0 0 60 60"><ellipse cx="9.8" cy="25.5" rx="3.2" ry="5.5" fill="#25313b"/><path d="M14,34.6 H22.8 L26.7,46.5 C26.9,47.2 26.5,47.8 26,48.1 L20,50.4 C19.3,50.6 18.7,50.3 18.5,49.6 Z" fill="#25313b" /><path d="M11,16.4 H24.9 V34.6 H11 A1,1 0 0 1 10,33.6 V17.4 A1,1 0 0 1 11,16.4 Z" fill="#cbcbcb" /><path d="M24.9,16.4 C32,16.4 40,12 45.6,8.5 V42.5 C40,39 32,34.6 24.9,34.6 Z" fill="#ececec" /><ellipse cx="51.3" cy="25.5" rx="2.1" ry="3.4" fill="#25313b"/><rect x="45.5" y="7.3" width="5.2" height="36.4" rx="2.6" fill="#3f4fb8"/></svg>
<svg style="position:absolute;left:282px;top:768px" width="60" height="60" viewBox="0 0 60 60"><path d="M6.1,23 L29.9,8 L53.7,23 V48 A2.4,2.4 0 0 1 51.3,50.4 H8.5 A2.4,2.4 0 0 1 6.1,48 Z" fill="#dedede" /><path d="M6.6,22.8 L29.9,7.9 L53.3,22.8 L50.1,24.6 L29.9,11 L9.8,24.6 Z" fill="#bdbdbd" /><path d="M9.8,24.6 L29.9,11 L50.1,24.6 L29.9,38.5 Z" fill="#fff" /><path d="M26.5,32 A8,8 0 1 1 30.5,32.6" fill="none" stroke="#6db33f" stroke-width="2.7" stroke-linecap="round" stroke-linejoin="round" stroke-linecap="butt"/><path d="M21.3,30.6 L27.3,29 L27,33.5 Z" fill="#6db33f" /><path d="M29.75,20.3 V25 H33.4" fill="none" stroke="#25313b" stroke-width="1.9" stroke-linecap="round" stroke-linejoin="round" stroke-linecap="butt"/></svg>
<svg style="position:absolute;left:282px;top:826px" width="60" height="60" viewBox="0 0 60 60"><rect x="6.4" y="9.7" width="47.3" height="38.9" rx="2.4" fill="#e4e4e4"/><rect x="9.4" y="13.05" width="41.3" height="31.85" fill="#25313b"/><path d="M30.05,19.3 V34" fill="none" stroke="#fff" stroke-width="3.1" stroke-linecap="round" stroke-linejoin="round" /><circle cx="30.05" cy="35.8" r="3.2" fill="#fff"/><rect x="18.8" y="19.7" width="5.2" height="2.5" rx="1.25" fill="#e34d1b"/><rect x="18.8" y="24.55" width="5.2" height="2.5" rx="1.25" fill="#f5b942"/><rect x="18.8" y="29.4" width="5.2" height="2.5" rx="1.25" fill="#7cb94a"/></svg>
<svg style="position:absolute;left:282px;top:884px" width="60" height="60" viewBox="0 0 60 60"><circle cx="29.9" cy="28.8" r="23.7" fill="#25313b"/><text x="29.9" y="31.9" font-size="13" font-weight="700" fill="#fff" text-anchor="middle" font-family="Liberation Sans" letter-spacing="0.2">.com</text><circle cx="45.2" cy="44.3" r="8.8" fill="#fff"/><circle cx="45.2" cy="44.3" r="8.5" fill="#78b24b"/><path d="M41.3,44.3 L44,47 L49.3,41.7" fill="none" stroke="#fff" stroke-width="2.2" stroke-linecap="round" stroke-linejoin="round" /></svg>
<svg style="position:absolute;left:282px;top:942px" width="60" height="60" viewBox="0 0 60 60"><rect x="9.1" y="4.9" width="41.9" height="52" rx="2.4" fill="#ececec"/><path d="M17.6,19.4 C18.2,16.6 20,15.9 21.9,15.9 C24.6,15.9 26.2,17.6 26.2,19.9 C26.2,23.3 22,24.2 21.6,27.6" fill="none" stroke="#25313b" stroke-width="3.5" stroke-linecap="round" stroke-linejoin="round" /><circle cx="21.65" cy="32.1" r="2.45" fill="#25313b"/><path d="M33.3,10 H44 V20 H37 L33.3,23 Z" fill="#94c06a" /><path d="M33.3,26 H44 V35.85 H37 L33.3,39.1 Z" fill="#5a8f29" /></svg>
<svg style="position:absolute;left:532px;top:710px" width="60" height="60" viewBox="0 0 60 60"><g transform="rotate(-45 29.9 28.8)"><rect x="10.15" y="14.65" width="39.5" height="28.3" rx="2.5" fill="#8e55a9"/><rect x="10.15" y="19.3" width="39.5" height="6.5" fill="#25313b"/><rect x="35.5" y="28.8" width="8" height="6" fill="#6f3f8a" transform="rotate(0)"/></g><circle cx="45.2" cy="44.3" r="8.8" fill="#fff"/><circle cx="45.2" cy="44.3" r="8.5" fill="#27ae60"/><path d="M41.3,44.3 L44,47 L49.3,41.7" fill="none" stroke="#fff" stroke-width="2.2" stroke-linecap="round" stroke-linejoin="round" /></svg>
<svg style="position:absolute;left:532px;top:768px" width="60" height="60" viewBox="0 0 60 60"><path d="M47.4,7.9 L51,9 V49.2 L47.4,50 Z" fill="#c4c4c4" /><path d="M51,10 L53.7,11 V47.5 L51,48.8 Z" fill="#b4b4b4" /><path d="M18.8,4.9 H47.4 V52.8 L43.5,50 L39.6,52.8 L35.7,50 L31.8,52.8 L27.9,50 L24,52.8 L20.1,50 L16.2,52.8 L12.3,50 L8.4,52.8 L6.1,51 V17.6 Z" fill="#ebebeb" /><path d="M6.1,17.6 L18.8,4.9 V17.6 Z" fill="#c8c8c8" /><path d="M18.6,23.1 H35.1" fill="none" stroke="#7cb34a" stroke-width="2.7" stroke-linecap="round" stroke-linejoin="round" /><path d="M18.6,30.4 H27.5 M32.9,30.4 H35.1 M18.6,35.2 H27.5 M32.9,35.2 H35.1" fill="none" stroke="#25313b" stroke-width="2.7" stroke-linecap="round" stroke-linejoin="round" /><path d="M32.9,40.1 H35.1" fill="none" stroke="#7cb34a" stroke-width="2.7" stroke-linecap="round" stroke-linejoin="round" /></svg>
<svg style="position:absolute;left:532px;top:826px" width="60" height="60" viewBox="0 0 60 60"><g transform="rotate(-45 29.9 28.8)"><rect x="10.15" y="14.65" width="39.5" height="28.3" rx="2.5" fill="#ebebeb"/><rect x="10.15" y="19.3" width="39.5" height="6.5" fill="#25313b"/><rect x="35.5" y="28.8" width="8" height="6" fill="#d9d9d9" transform="rotate(0)"/></g><circle cx="45.2" cy="44.3" r="8.8" fill="#fff"/><circle cx="45.2" cy="44.3" r="8.5" fill="#25313b"/><circle cx="45.2" cy="40.2" r="1.3" fill="#fff"/><path d="M45.2,43.3 V47.6" fill="none" stroke="#fff" stroke-width="2.4" stroke-linecap="round" stroke-linejoin="round" stroke-linecap="butt"/></svg>
<svg style="position:absolute;left:532px;top:884px" width="60" height="60" viewBox="0 0 60 60"><circle cx="29.9" cy="28.8" r="22.5" fill="none" stroke="#f0c419" stroke-width="2.7" stroke-dasharray="7.2 4.58" stroke-dashoffset="3.6" stroke-linecap="round" transform="rotate(-90 29.9 28.8)"/><text x="29.9" y="31.9" font-size="13" font-weight="700" fill="#25313b" text-anchor="middle" font-family="Liberation Sans" letter-spacing="0.2">.com</text><circle cx="45.2" cy="44.3" r="8.8" fill="#fff"/><circle cx="45.2" cy="44.3" r="8.5" fill="#25313b"/><path d="M41,44.3 L45.3,40.3 V42.6 H49.5 V46 H45.3 V48.3 Z" fill="#fff" /></svg>
<svg style="position:absolute;left:532px;top:942px" width="60" height="60" viewBox="0 0 60 60"><path d="M6.05,17.7 L14,11.9 H44.7 L53.8,17.7 L51,44.7 H8.4 Z" fill="#1a9bd9" /><path d="M6.05,17.7 L14,11.9 H44.7 L53.8,17.7 V18.2 H6.05 Z" fill="#1689c6" /><path d="M20,17.7 A10,10 0 0 1 40,17.7" fill="none" stroke="#25313b" stroke-width="3.5" stroke-linecap="round" stroke-linejoin="round" stroke-linecap="butt"/><polygon points="30.00,26.85 32.14,29.28 35.37,29.08 35.17,32.31 37.60,34.45 35.17,36.59 35.37,39.82 32.14,39.62 30.00,42.05 27.86,39.62 24.63,39.82 24.83,36.59 22.40,34.45 24.83,32.31 24.63,29.08 27.86,29.28" fill="#fff" stroke="#fff" stroke-width="1.4" stroke-linejoin="round"/><circle cx="30" cy="34.45" r="3" fill="#1a9bd9"/></svg>
<svg style="position:absolute;left:782px;top:710px" width="60" height="60" viewBox="0 0 60 60"><path d="M21.9,4.9 H48.3 A2.4,2.4 0 0 1 50.7,7.3 V50.4 A2.4,2.4 0 0 1 48.3,52.8 H11.5 A2.4,2.4 0 0 1 9.1,50.4 V17.6 Z" fill="#ebebeb" /><path d="M9.1,17.6 L21.9,4.9 V17.6 Z" fill="#c8c8c8" /><path d="M28.2,20.95 H31.6 V27.9 H36.1 L29.9,33.7 L23.7,27.9 H28.2 Z" fill="#25313b" /><path d="M23.6,37.5 H36.2" fill="none" stroke="#1a96d4" stroke-width="2.6" stroke-linecap="round" stroke-linejoin="round" /></svg>
<svg style="position:absolute;left:782px;top:768px" width="60" height="60" viewBox="0 0 60 60"><g transform="rotate(45 37 21.9)"><circle cx="37" cy="21.9" r="15.8" fill="#f1c40f"/><path d="M22.5,29 C25.5,38 29.8,44 30.5,51.5 H43.5 C44.2,44 48.5,38 51.5,29 Z" fill="#f1c40f"/><rect x="29.8" y="51" width="14.4" height="6.6" rx="1" fill="#25313b"/><rect x="32.5" y="57" width="9" height="3" rx="1.4" fill="#25313b"/></g><path d="M33,19.5 C33.5,17 37,16.5 39,18 C41,19.5 40.5,23 37,24 C35,24.7 33,25 31,26.5" fill="none" stroke="#fff" stroke-width="2.6" stroke-linecap="round" stroke-linejoin="round" /><circle cx="26.8" cy="31.8" r="2" fill="#fff"/></svg>
<svg style="position:absolute;left:782px;top:826px" width="60" height="60" viewBox="0 0 60 60"><circle cx="29.9" cy="28.8" r="22" fill="none" stroke="#dcdcdc" stroke-width="3.4"/><ellipse cx="29.75" cy="23.1" rx="4.6" ry="5.5" fill="#1a96d4"/><path d="M22.8,35.8 C22.8,31.5 27,30.5 28,28 H31.5 C32.5,30.5 37,31.5 37,35.8 Z" fill="#1a96d4" /><circle cx="45.2" cy="44.3" r="8.8" fill="#fff"/><circle cx="45.2" cy="44.3" r="8.5" fill="#25313b"/><polygon points="50.10,44.30 48.62,45.72 48.66,47.76 46.62,47.72 45.20,49.20 43.78,47.72 41.74,47.76 41.78,45.72 40.30,44.30 41.78,42.88 41.74,40.84 43.78,40.88 45.20,39.40 46.62,40.88 48.66,40.84 48.62,42.88" fill="#fff"/><circle cx="45.2" cy="44.3" r="1.8" fill="#25313b"/></svg>
<svg style="position:absolute;left:782px;top:884px" width="60" height="60" viewBox="0 0 60 60"><path d="M11.6,4.9 H48.2 A2.5,2.5 0 0 1 50.7,7.4 V24.9 H9.1 V7.4 A2.5,2.5 0 0 1 11.6,4.9 Z" fill="#98c16e" /><path d="M9.1,24.9 H50.7 V42.4 A2.5,2.5 0 0 1 48.2,44.9 H18.2 L10,52.8 C9.5,53 9.1,52.7 9.1,52.2 Z" fill="#82b357" /><path d="M24.7,4.9 A5.2,5.2 0 0 0 35.1,4.9 Z" fill="#5e9530" /><path d="M24.7,44.9 A5.2,5.2 0 0 1 35.1,44.9 Z" fill="#5e9530" /><path d="M16.2,30.8 L17.3,27 L25.1,19.2 A1.3,1.3 0 0 1 27,19.2 L27.9,20.1 A1.3,1.3 0 0 1 27.9,22 L20.1,29.8 Z" fill="#fff" /><path d="M32.9,20 H42.7 M32.9,24.9 H42.7 M32.9,29.75 H42.7" fill="none" stroke="#fff" stroke-width="2.2" stroke-linecap="round" stroke-linejoin="round" /></svg>
<div style="position:absolute;left:1269px;top:190px;width:325px;height:480px;background:#fff;border:1px solid #e2e2e2;border-radius:5px;box-sizing:border-box;box-shadow:0 1px 3px rgba(0,0,0,0.05)"></div>
<div class="t" style="left:1293px;top:213.97px;font-size:14.4px;color:#0e1d3b;font-weight:700;-webkit-text-stroke:0.25px #fff">General Information</div>
<div class="t" style="left:1294.5px;top:252.42px;font-size:12.8px;color:#4d5670;font-weight:400;-webkit-text-stroke:0.35px #4d5670;letter-spacing:0px">Current User</div>
<div class="t" style="left:1294.5px;top:274.97px;font-size:14.4px;color:#333a45;font-weight:400;letter-spacing:0.25px">kavindat</div>
<div style="position:absolute;left:1270px;top:301px;width:323px;height:1px;background:#dedede"></div>
<div class="t" style="left:1294.5px;top:311.12px;font-size:12.8px;color:#4d5670;font-weight:400;-webkit-text-stroke:0.35px #4d5670;letter-spacing:0.18px">Primary Domain</div>
<div class="t" style="left:1312.5px;top:334.99px;font-size:14.6px;color:#3f5b9e;font-weight:400;">kavindatesting.slhosted.lk</div>
<svg style="position:absolute;left:1290px;top:335px" width="20" height="20" viewBox="0 0 20 20"><path d="M8.2,9 V7 A2.6,2.6 0 0 1 13.4,7 V9" fill="none" stroke="#222" stroke-width="1.2" stroke-linecap="round" stroke-linejoin="round" /><rect x="6.3" y="9" width="9.2" height="6.4" rx="1" fill="none" stroke="#222" stroke-width="1.2"/><path d="M10.8,11.3 V13" fill="none" stroke="#222" stroke-width="1.2" stroke-linecap="round" stroke-linejoin="round" /></svg>
<svg style="position:absolute;left:1480px;top:335px" width="20" height="20" viewBox="0 0 20 20"><path d="M10.5,5.5 H7.3 A1,1 0 0 0 6.3,6.5 V13.8 A1,1 0 0 0 7.3,14.8 H14.6 A1,1 0 0 0 15.6,13.8 V10.6" fill="none" stroke="#3f5b9e" stroke-width="1.3" stroke-linecap="round" stroke-linejoin="round" /><path d="M10.6,10.5 L15.8,5.3 M12.3,5.1 H16 V8.8" fill="none" stroke="#3f5b9e" stroke-width="1.3" stroke-linecap="round" stroke-linejoin="round" /></svg>
<div style="position:absolute;left:1270px;top:363px;width:323px;height:1px;background:#dedede"></div>
<div class="t" style="left:1294.5px;top:373.12px;font-size:12.8px;color:#4d5670;font-weight:400;-webkit-text-stroke:0.35px #4d5670;letter-spacing:-0.19px">Shared IP Address</div>
<div class="t" style="left:1294.5px;top:395.67px;font-size:14.4px;color:#333a45;font-weight:400;letter-spacing:-0.08px">154.12.253.96</div>
<div style="position:absolute;left:1270px;top:423px;width:323px;height:1px;background:#dedede"></div>
<div class="t" style="left:1294.5px;top:433.02px;font-size:12.8px;color:#4d5670;font-weight:400;-webkit-text-stroke:0.35px #4d5670;letter-spacing:0.1px">Home Directory</div>
<div class="t" style="left:1294.5px;top:455.57px;font-size:14.4px;color:#333a45;font-weight:400;letter-spacing:0.45px">/home/kavindat</div>
<div style="position:absolute;left:1270px;top:482px;width:323px;height:1px;background:#dedede"></div>
<div class="t" style="left:1294.5px;top:492.99px;font-size:12.5px;color:#4d5670;font-weight:400;-webkit-text-stroke:0.35px #4d5670;letter-spacing:0px">Last Login IP Address</div>
<div class="t" style="left:1294.5px;top:515.27px;font-size:14.4px;color:#333a45;font-weight:400;letter-spacing:-0.12px">80.209.228.23</div>
<div style="position:absolute;left:1270px;top:541px;width:323px;height:1px;background:#dedede"></div>
<div class="t" style="left:1294.5px;top:553.42px;font-size:12.8px;color:#4d5670;font-weight:400;-webkit-text-stroke:0.35px #4d5670;letter-spacing:0px">Theme</div>
<div style="position:absolute;left:1294px;top:574px;width:269px;height:34px;box-sizing:border-box;border:1px solid #dfe3ea;border-radius:5px;background:#f6f8fb"></div>
<div class="t" style="left:1303.5px;top:583.19px;font-size:14.6px;color:#1f2530;font-weight:400;letter-spacing:0.5px">jupiter</div>
<svg style="position:absolute;left:1544px;top:587px" width="10" height="8" viewBox="0 0 10 8"><path d="M1.8 1.9 L9 1.9 L5.4 6.9 Z" fill="#767676"/></svg>
<div style="position:absolute;left:1270px;top:616px;width:323px;height:1px;background:#dedede"></div>
<div class="t" style="left:1294.5px;top:634.52px;font-size:14.9px;color:#3f5b9e;font-weight:400;">Server Information</div>
<svg style="position:absolute;left:1558px;top:634px" width="12" height="16" viewBox="0 0 12 16"><path d="M3.6 3.6 L9 9 L3.6 14.4" stroke="#6f84ad" stroke-width="1.8" fill="none"/></svg>
<div style="position:absolute;left:1269px;top:683px;width:325px;height:400px;background:#fff;border:1px solid #e2e2e2;border-radius:5px;box-sizing:border-box;box-shadow:0 1px 3px rgba(0,0,0,0.05)"></div>
<div class="t" style="left:1292px;top:707.47px;font-size:14.4px;color:#0e1d3b;font-weight:700;-webkit-text-stroke:0.25px #fff;letter-spacing:-0.35px">Statistics</div>
<div class="t" style="left:1294.5px;top:744.08px;font-size:12.4px;color:#4d5670;font-weight:400;-webkit-text-stroke:0.35px #4d5670;letter-spacing:0px">MySQL® Databases</div>
<div class="t" style="left:1294.5px;top:766.27px;font-size:14.4px;color:#333a45;font-weight:400;letter-spacing:0px">1 / 10&nbsp;&nbsp;&nbsp;(10%)</div>
<div style="position:absolute;left:1270px;top:792px;width:323px;height:1px;background:#dedede"></div>
<div class="t" style="left:1294.5px;top:802.82px;font-size:12.8px;color:#4d5670;font-weight:400;-webkit-text-stroke:0.35px #4d5670;letter-spacing:0px">Mailing Lists</div>
<div class="t" style="left:1294.5px;top:825.37px;font-size:14.4px;color:#333a45;font-weight:400;letter-spacing:0px">0 / <span style="font-size:11.5px;position:relative;top:-2.6px">∞</span></div>
<div style="position:absolute;left:1270px;top:851px;width:323px;height:1px;background:#dedede"></div>
<div class="t" style="left:1294.5px;top:861.92px;font-size:12.8px;color:#4d5670;font-weight:400;-webkit-text-stroke:0.35px #4d5670;letter-spacing:0px">Autoresponders</div>
<div class="t" style="left:1294.5px;top:884.47px;font-size:14.4px;color:#333a45;font-weight:400;letter-spacing:0px">0 / <span style="font-size:11.5px;position:relative;top:-2.6px">∞</span></div>
<div style="position:absolute;left:1270px;top:910px;width:323px;height:1px;background:#dedede"></div>
<div class="t" style="left:1294.5px;top:920.82px;font-size:12.8px;color:#4d5670;font-weight:400;-webkit-text-stroke:0.35px #4d5670;letter-spacing:0px">Forwarders</div>
<div class="t" style="left:1294.5px;top:943.37px;font-size:14.4px;color:#333a45;font-weight:400;letter-spacing:0px">0 / <span style="font-size:11.5px;position:relative;top:-2.6px">∞</span></div>
<div style="position:absolute;left:1270px;top:971px;width:323px;height:1px;background:#dedede"></div>
<div class="t" style="left:1294.5px;top:979.92px;font-size:12.8px;color:#4d5670;font-weight:400;-webkit-text-stroke:0.35px #4d5670;letter-spacing:0px">Email Filters</div>
<div class="t" style="left:1294.5px;top:1002.47px;font-size:14.4px;color:#333a45;font-weight:400;letter-spacing:0px">0 / <span style="font-size:11.5px;position:relative;top:-2.6px">∞</span></div>
<div style="position:absolute;left:249px;top:987px;width:1430px;height:1px;background:#e6d8e8"></div>
</body></html>
